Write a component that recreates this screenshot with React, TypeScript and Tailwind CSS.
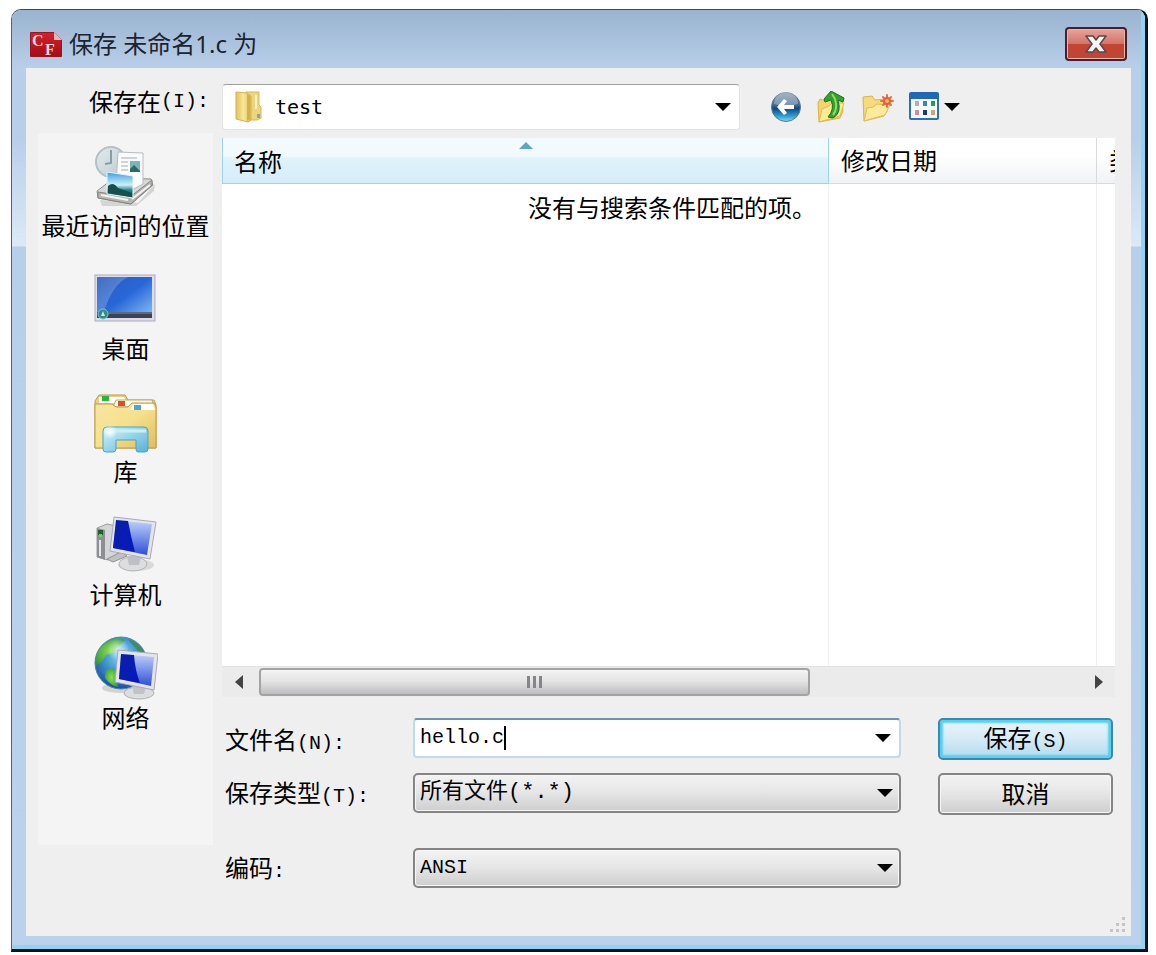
import type { ReactNode } from 'react';

const cjk = "font-['Noto_Sans','Noto_Sans_CJK_SC',sans-serif]";
const mono = "font-['Liberation_Mono','Noto_Sans_CJK_SC',monospace]";

function Caret() {
  return (
    <svg viewBox="0 0 16 8" className="pointer-events-none h-2 w-4" aria-hidden="true">
      <path d="M0 0H16L8 8Z" fill="#000" />
    </svg>
  );
}

function Hotkey({ children }: { children: ReactNode }) {
  return <span className={`text-xl ${mono}`}>{children}</span>;
}

function AppLogo() {
  return (
    <svg viewBox="0 0 32 25" className="h-[25px] w-8" aria-hidden="true">
      <defs>
        <linearGradient id="logoRed" x1="0" y1="0" x2="0" y2="1">
          <stop offset="0" stopColor="#d2222b" />
          <stop offset="1" stopColor="#a30d18" />
        </linearGradient>
      </defs>
      <path d="M0.5 0.5H24L31.5 8V24.5H0.5Z" fill="url(#logoRed)" stroke="#a3121b" />
      <path d="M24 0L32 8H24Z" fill="#e3b6bd" />
      <text x="2" y="14" fontSize="16" fontWeight="700" fontFamily="Liberation Serif, serif" fill="#f6d9dc">C</text>
      <text x="15" y="23" fontSize="16" fontWeight="700" fontFamily="Liberation Serif, serif" fill="#f6d9dc">F</text>
    </svg>
  );
}

function FolderIcon() {
  return (
    <svg viewBox="0 0 28 34" className="h-[34px] w-7 shrink-0" aria-hidden="true">
      <defs>
        <linearGradient id="folderFront" x1="0" y1="0" x2="1" y2="0">
          <stop offset="0" stopColor="#e2c25f" />
          <stop offset="0.5" stopColor="#f8e899" />
          <stop offset="1" stopColor="#dfbd58" />
        </linearGradient>
      </defs>
      <path d="M11 2H24V15L26 17V28L22 30H11Z" fill="#ecd57c" stroke="#d9b95a" />
      <path d="M1 2L12 3L16 6V30L13 32L1 29Z" fill="url(#folderFront)" stroke="#d4b154" />
      <path d="M12 4V31L15 29V6Z" fill="#cfa944" opacity="0.8" />
      <rect x="22" y="24" width="3" height="4" fill="#7fa9a6" />
      <path d="M21 5V19" stroke="#fff6bd" strokeWidth="2" />
    </svg>
  );
}

function BackIcon() {
  return (
    <svg viewBox="0 0 32 32" className="size-8" aria-hidden="true">
      <defs>
        <linearGradient id="backBall" x1="0" y1="0" x2="0" y2="1">
          <stop offset="0" stopColor="#7f93a8" />
          <stop offset="0.45" stopColor="#3b6690" />
          <stop offset="0.55" stopColor="#0d4a80" />
          <stop offset="0.8" stopColor="#2b9ad0" />
          <stop offset="1" stopColor="#7fdcf0" />
        </linearGradient>
      </defs>
      <circle cx="16" cy="16" r="14.5" fill="url(#backBall)" stroke="#5f7890" />
      <path d="M4 13A12 12 0 0 1 28 13Q16 17 4 13Z" fill="#fff" opacity="0.3" />
      <path d="M7 16L14 8L17 10L14 14H24V18H14L17 22L14 24Z" fill="#fff" />
    </svg>
  );
}

function UpIcon() {
  return (
    <svg viewBox="0 0 32 32" className="size-8" aria-hidden="true">
      <path d="M2 12L4 8L9 10L12 7L26 8L27 20L24 27L3 31Z" fill="#f2d571" stroke="#d9b14a" />
      <path d="M3 31L6 18L13 15L16 12L28 12L24 25Z" fill="#fdeb94" stroke="#dfb953" />
      <path d="M15 0L28 7L27 11L22 9Q26 22 17 27L12 26Q19 18 15 9L9 11L8 8Z" fill="#37a02c" stroke="#1b7420" strokeLinejoin="round" />
      <path d="M16 3L19 8Q22 18 17 24" fill="none" stroke="#86dc6c" strokeWidth="2" />
    </svg>
  );
}

function NewFolderIcon() {
  return (
    <svg viewBox="0 0 32 32" className="size-8" aria-hidden="true">
      <path d="M1 6L10 5L13 9L24 8L25 20L22 25L2 30Z" fill="#f6da7c" stroke="#dfb04d" />
      <path d="M2 30L5 17L11 16L15 13L28 14L23 24Z" fill="#fdeb9d" stroke="#e3b95c" />
      <g stroke="#e6713f" strokeWidth="2" strokeLinecap="round">
        <path d="M25 4V16M19 10H31M21 6L29 14M29 6L21 14" />
      </g>
      <circle cx="25" cy="10" r="4" fill="#e9622d" />
      <circle cx="25" cy="10" r="2" fill="#f9b07a" />
    </svg>
  );
}

function ViewIcon() {
  return (
    <svg viewBox="0 0 32 32" className="size-8" aria-hidden="true">
      <rect x="2" y="3" width="28" height="25" rx="1" fill="#f4f8fb" stroke="#2f6fb5" strokeWidth="2" />
      <path d="M1 3Q1 1 3 1H29Q31 1 31 3V8H1Z" fill="#1f68b8" />
      <rect x="7" y="10" width="4" height="5" fill="#b7aeb4" />
      <rect x="15" y="10" width="4" height="5" fill="#3d83c2" />
      <rect x="23" y="10" width="4" height="5" fill="#2f9a45" />
      <rect x="7" y="19" width="4" height="5" fill="#cf9186" />
      <rect x="15" y="19" width="4" height="5" fill="#173c7c" />
      <rect x="23" y="19" width="4" height="5" fill="#c4ab72" />
    </svg>
  );
}

function RecentIcon() {
  return (
    <svg viewBox="0 0 64 64" className="size-16" aria-hidden="true">
      <defs>
        <linearGradient id="clockFace" x1="0" y1="0" x2="1" y2="1">
          <stop offset="0" stopColor="#e4ebec" />
          <stop offset="1" stopColor="#b9cbd2" />
        </linearGradient>
        <linearGradient id="photo" x1="0" y1="0" x2="0" y2="1">
          <stop offset="0" stopColor="#3f9be2" />
          <stop offset="0.5" stopColor="#c9f2f7" />
          <stop offset="0.7" stopColor="#2b7f86" />
          <stop offset="1" stopColor="#0e5a7d" />
        </linearGradient>
      </defs>
      <path d="M6 56L44 59L61 40L60 47L42 62L8 62Z" fill="#777" opacity="0.25" />
      <path d="M3 47L20 34L57 35L59 41L37 60L4 54Z" fill="#d8d8d6" stroke="#8d8d8a" />
      <path d="M4 48L36 53L58 36V41L37 60L4 54Z" fill="#b6b5b2" stroke="#858480" />
      <path d="M7 51L34 56M38 55L56 41" stroke="#f3f3f1" strokeWidth="2" />
      <circle cx="17" cy="18" r="15" fill="url(#clockFace)" stroke="#b3c0c5" strokeWidth="2" />
      <path d="M17 6V19L11 20" fill="none" stroke="#8b9ca6" strokeWidth="2" />
      <path d="M24 8L49 9V40L34 48L22 42Z" fill="#fafafa" stroke="#b7bcc0" />
      <path d="M27 14H43M27 18H34M27 22H34M27 26H34" stroke="#a7adb3" />
      <rect x="36" y="17" width="10" height="11" fill="#79b4b9" />
      <path d="M36 25L40 21L46 27V28H36Z" fill="#276b63" />
      <path d="M13 28L39 32V54L13 50Z" fill="url(#photo)" stroke="#e7f4f8" />
      <path d="M14 42Q19 37 24 44L38 49V53L14 49Z" fill="#174f4c" />
    </svg>
  );
}

function DesktopIcon() {
  return (
    <svg viewBox="0 0 64 64" className="size-16" aria-hidden="true">
      <defs>
        <linearGradient id="desk" x1="0" y1="0" x2="1" y2="1">
          <stop offset="0" stopColor="#2d5cb9" />
          <stop offset="0.5" stopColor="#2867d8" />
          <stop offset="1" stopColor="#8cc1f8" />
        </linearGradient>
        <linearGradient id="deskGlow" x1="0" y1="0" x2="1" y2="1">
          <stop offset="0" stopColor="#fff" stopOpacity="0.1" />
          <stop offset="0.5" stopColor="#fff" stopOpacity="0.2" />
          <stop offset="1" stopColor="#fff" stopOpacity="0" />
        </linearGradient>
      </defs>
      <rect x="1" y="8" width="60" height="46" fill="#dcdde8" stroke="#a9abc0" />
      <rect x="3" y="10" width="55" height="41" fill="url(#desk)" />
      <path d="M3 10H34Q18 18 10 45H3Z" fill="url(#deskGlow)" />
      <rect x="3" y="45" width="55" height="6" fill="#3c4354" />
      <path d="M14 46H58" stroke="#8591a8" />
      <circle cx="9" cy="47" r="5" fill="#2c8d8e" stroke="#87c4c5" />
      <path d="M7 49L9 44L11 49Z" fill="#c7f0c8" />
    </svg>
  );
}

function LibraryIcon() {
  return (
    <svg viewBox="0 0 64 64" className="size-16" aria-hidden="true">
      <defs>
        <linearGradient id="libFolder" x1="0" y1="0" x2="1" y2="1">
          <stop offset="0" stopColor="#f8e6a0" />
          <stop offset="0.5" stopColor="#f5e08c" />
          <stop offset="1" stopColor="#e0bd55" />
        </linearGradient>
        <linearGradient id="libStand" x1="0" y1="0" x2="1" y2="1">
          <stop offset="0" stopColor="#d5f5fc" />
          <stop offset="1" stopColor="#57b1d9" />
        </linearGradient>
        <radialGradient id="libGlow">
          <stop offset="0" stopColor="#fff" />
          <stop offset="1" stopColor="#fff" stopOpacity="0" />
        </radialGradient>
      </defs>
      <path d="M1 58V11L5 5H31L34 10H60L62 15V58Z" fill="#eacf7e" stroke="#bd9a4e" />
      <path d="M5 13V7H30L33 13Z" fill="#fff" />
      <rect x="8" y="6" width="7" height="5" fill="#2db53a" />
      <path d="M19 17L22 10H58L60 17Z" fill="#fffdf3" stroke="#c9a75a" />
      <rect x="24" y="11" width="7" height="5" fill="#cc5431" />
      <path d="M1 58V14H18L22 17H34L38 13H60L62 17V58Z" fill="url(#libFolder)" stroke="#bd9a4e" />
      <path d="M36 20L39 14H59L61 20Z" fill="#fff" />
      <rect x="40" y="15" width="7" height="5" fill="#55a5cb" />
      <path d="M9 59V41Q9 37 13 37H50Q54 37 54 41V59Q54 62 51 62H44Q42 62 42 59V50H22V59Q22 62 19 62H12Q9 62 9 59Z" fill="url(#libStand)" stroke="#4ba2c5" />
      <path d="M11 41H52" stroke="#c5effa" strokeWidth="3" />
      <circle cx="16" cy="42" r="7" fill="url(#libGlow)" />
    </svg>
  );
}

function ScreenGradients({ id }: { id: string }) {
  return (
    <defs>
      <linearGradient id={`${id}Dark`} x1="0" y1="0" x2="1" y2="1">
        <stop offset="0" stopColor="#0b21a4" />
        <stop offset="1" stopColor="#0716c4" />
      </linearGradient>
      <linearGradient id={`${id}Light`} x1="0" y1="0" x2="0" y2="1">
        <stop offset="0" stopColor="#c0d2fa" />
        <stop offset="1" stopColor="#304fd6" />
      </linearGradient>
    </defs>
  );
}

function ComputerIcon() {
  return (
    <svg viewBox="0 0 64 64" className="size-16" aria-hidden="true">
      <ScreenGradients id="pc" />
      <path d="M3 15L13 11L27 14V42L14 47L3 44Z" fill="#d4d5d7" stroke="#9a9ca0" />
      <path d="M3 15L11 17V47L3 44Z" fill="#8c9094" />
      <rect x="4" y="17" width="5" height="5" fill="#295b35" />
      <rect x="5" y="21" width="3" height="3" fill="#6bd457" />
      <path d="M6 27V43" stroke="#e4e5e6" strokeWidth="2" />
      <path d="M13 46L27 39L33 43L19 49Z" fill="#c0c1c3" stroke="#909295" />
      <ellipse cx="42" cy="52" rx="18" ry="6" fill="#aaa" opacity="0.35" />
      <ellipse cx="39" cy="51" rx="14" ry="7" fill="#dcdddf" stroke="#b3b4b7" />
      <path d="M33 43H47L45 52H35Z" fill="#bfc0c3" />
      <path d="M20 4L62 9L56 46L16 38Z" fill="#e4e5ec" stroke="#a8a9b6" />
      <path d="M22 7L58 11L53 42L19 35Z" fill="url(#pcLight)" />
      <path d="M22 7L34 8Q37 24 41 39L19 35Z" fill="url(#pcDark)" />
    </svg>
  );
}

function NetworkIcon() {
  return (
    <svg viewBox="0 0 64 64" className="size-16" aria-hidden="true">
      <ScreenGradients id="net" />
      <defs>
        <radialGradient id="globeSea" cx="0.5" cy="0.35" r="0.65">
          <stop offset="0" stopColor="#8fdcee" />
          <stop offset="0.5" stopColor="#3f94cf" />
          <stop offset="1" stopColor="#1b4fa0" />
        </radialGradient>
        <radialGradient id="globeLand" cx="0.5" cy="0.5" r="0.7">
          <stop offset="0" stopColor="#8be04c" />
          <stop offset="1" stopColor="#2c8d45" />
        </radialGradient>
        <radialGradient id="globeShine">
          <stop offset="0" stopColor="#fff" stopOpacity="0.7" />
          <stop offset="1" stopColor="#fff" stopOpacity="0" />
        </radialGradient>
      </defs>
      <ellipse cx="26" cy="52" rx="18" ry="5" fill="#888" opacity="0.3" />
      <circle cx="27" cy="27" r="26" fill="url(#globeSea)" stroke="#4f86a8" />
      <path d="M2 20Q8 5 24 2L31 4L25 10L19 17L12 19L8 26L2 29Z" fill="url(#globeLand)" />
      <path d="M11 35L17 32L24 36L24 51Q16 49 11 42Z" fill="url(#globeLand)" />
      <path d="M34 3Q46 7 51 17L44 15L39 9Z" fill="#3a8d68" />
      <circle cx="24" cy="13" r="11" fill="url(#globeShine)" />
      <ellipse cx="45" cy="57" rx="15" ry="6" fill="#dcdddf" stroke="#b0b1b5" />
      <path d="M38 50H52L50 58H40Z" fill="#c2c3c6" />
      <path d="M24 14L64 18L60 54L21 46Z" fill="#e4e5ec" stroke="#a8a9b6" />
      <path d="M27 18L60 21L57 50L25 43Z" fill="url(#netLight)" />
      <path d="M27 18L40 19Q41 34 46 47L25 43Z" fill="url(#netDark)" />
    </svg>
  );
}

const places = [
  { label: '最近访问的位置', icon: <RecentIcon /> },
  { label: '桌面', icon: <DesktopIcon /> },
  { label: '库', icon: <LibraryIcon /> },
  { label: '计算机', icon: <ComputerIcon /> },
  { label: '网络', icon: <NetworkIcon /> },
];

function TitleBar() {
  return (
    <header className="flex h-[58px] items-center pt-2.5 pr-1 pl-1">
      <AppLogo />
      <h1 className="ml-[7px] flex-1 text-2xl leading-8 text-[#1b2430]">保存 未命名1.c 为</h1>
      <button
        aria-label="关闭"
        className="flex h-[34px] w-[62px] items-center justify-center rounded border-2 border-[#4a1e2c] bg-linear-to-b from-[#e5a49c] from-0% via-[#d4746a] via-48% to-[#cf6c58] shadow-[inset_0_0_0_1px_#eab3aa,inset_0_-15px_0_0_#c04532]"
      >
        <svg viewBox="0 0 22 18" className="h-[18px] w-[22px]" aria-hidden="true">
          <path d="M1 1H8L11 5L14 1H21L15 9L21 17H14L11 13L8 17H1L7 9Z" fill="#f4f4f4" stroke="#5b4650" strokeWidth="1.5" strokeLinejoin="round" />
        </svg>
      </button>
    </header>
  );
}

function LookInRow() {
  return (
    <div className="grid grid-cols-[175px_1fr] gap-x-[9px]">
      <label htmlFor="look-in" className="flex h-9 items-center justify-end pr-1 text-2xl">
        保存在<Hotkey>(I):</Hotkey>
      </label>
      <div className="flex items-center">
        <div className="flex h-[46px] flex-1 items-center rounded-sm border border-[#e3e3e3] border-t-[#a0a0a0] bg-white pl-3">
          <FolderIcon />
          <div className="grid flex-1 items-center">
            <select
              id="look-in"
              className="col-start-1 row-start-1 h-10 w-full appearance-none bg-transparent pl-3 font-['DejaVu_Sans_Mono',monospace] text-xl"
            >
              <option>test</option>
            </select>
            <span className="pointer-events-none col-start-1 row-start-1 mr-2 justify-self-end">
              <Caret />
            </span>
          </div>
        </div>
        <div className="flex w-[375px] items-center gap-[14px] pl-[30px]">
          <button aria-label="后退"><BackIcon /></button>
          <button aria-label="向上一级"><UpIcon /></button>
          <button aria-label="新建文件夹"><NewFolderIcon /></button>
          <button aria-label="查看" className="flex items-center gap-1">
            <ViewIcon />
            <Caret />
          </button>
        </div>
      </div>
    </div>
  );
}

function PlacesBar() {
  return (
    <nav className="flex flex-col gap-[25px] self-start bg-[#f4f4f4] pt-[11px] pb-[111px]">
      {places.map((place) => (
        <button key={place.label} className="flex flex-col items-center gap-0.5">
          {place.icon}
          <span className="text-2xl leading-8 whitespace-nowrap">{place.label}</span>
        </button>
      ))}
    </nav>
  );
}

function FileList() {
  return (
    <div>
      <table className="w-full table-fixed border-separate border-spacing-0 bg-white text-left">
        <colgroup>
          <col />
          <col className="w-[268px]" />
          <col className="w-[18px]" />
        </colgroup>
        <thead>
          <tr className="h-[46px] text-2xl">
            <th className="border-r border-b border-l border-[#9fd3ea] bg-linear-to-b from-[#f3fafd] from-40% via-[#e0f2fa] via-45% to-[#d5edf8] p-0 font-normal">
              <div className="grid h-[45px] grid-rows-[10px_1fr]">
                <svg viewBox="0 0 14 7" className="mt-1 h-[7px] w-3.5 justify-self-center" aria-hidden="true">
                  <path d="M0 7L7 0L14 7Z" fill="#5fa5cb" />
                </svg>
                <span className="pl-[11px] leading-7">名称</span>
              </div>
            </th>
            <th className="border-r border-b border-[#d8dadd] bg-linear-to-b from-white from-40% to-[#f1f2f4] p-0 pl-3 font-normal">
              修改日期
            </th>
            <th className="overflow-hidden border-b border-[#d8dadd] bg-linear-to-b from-white from-40% to-[#f1f2f4] p-0 pl-3 font-normal whitespace-nowrap">
              类型
            </th>
          </tr>
        </thead>
        <tbody>
          <tr className="h-[482px] align-top text-2xl leading-8">
            <td className="border-r border-[#eef0f3] p-0 pt-2 pr-3 text-right">没有与搜索条件匹配的项。</td>
            <td className="border-r border-[#eef0f3] p-0" />
            <td className="p-0" />
          </tr>
        </tbody>
      </table>
      <div className="flex h-[31px] items-center border-t border-[#e2e2e2] bg-[#ebebeb]">
        <button aria-label="向左滚动" className="flex h-full w-[37px] items-center justify-center pr-1">
          <svg viewBox="0 0 8 14" className="h-3.5 w-2" aria-hidden="true">
            <path d="M8 0V14L0 7Z" fill="#444" />
          </svg>
        </button>
        <div className="flex-1">
          <div className="flex h-7 w-[67%] items-center justify-center gap-[3px] rounded-sm border-2 border-[#a3a3a3] bg-linear-to-b from-[#f4f4f4] from-0% via-[#e4e4e5] via-45% to-[#bfbfc2]">
            <span className="h-3 w-[3px] bg-[#85868a]" />
            <span className="h-3 w-[3px] bg-[#85868a]" />
            <span className="h-3 w-[3px] bg-[#85868a]" />
          </div>
        </div>
        <button aria-label="向右滚动" className="flex h-full w-[33px] items-center justify-center">
          <svg viewBox="0 0 8 14" className="h-3.5 w-2" aria-hidden="true">
            <path d="M0 0L8 7L0 14Z" fill="#444" />
          </svg>
        </button>
      </div>
    </div>
  );
}

const glossy =
  'border-2 border-[#858585] bg-linear-to-b from-[#f3f3f3] from-0% via-[#e6e6e6] via-48% to-[#cecece] shadow-[inset_0_0_0_1px_#f6f6f6]';

function Dropdown({ id, option, className }: { id: string; option: string; className: string }) {
  return (
    <div className="grid items-center">
      <select
        id={id}
        className={`col-start-1 row-start-1 h-10 w-full appearance-none rounded-[5px] pl-[5px] ${glossy} ${mono} ${className}`}
      >
        <option>{option}</option>
      </select>
      <span className="pointer-events-none col-start-1 row-start-1 mr-2 justify-self-end">
        <Caret />
      </span>
    </div>
  );
}

function SaveForm() {
  return (
    <form
      className="mt-[21px] grid grid-cols-[191px_1fr_214px] items-start gap-y-[13px] text-2xl"
      onSubmit={(e) => e.preventDefault()}
    >
      <label htmlFor="file-name" className="pt-1.5 pl-[3px] leading-8">
        文件名<Hotkey>(N):</Hotkey>
      </label>
      <div className="flex h-10 items-center rounded border-2 border-[#c3d9ea] border-t-[#6d93ad] bg-white pr-2 pl-[5px]">
        <input
          id="file-name"
          defaultValue="hello.c"
          className={`field-sizing-content bg-transparent text-xl outline-none ${mono}`}
        />
        <span className="h-6 w-0.5 bg-black" />
        <button type="button" aria-label="历史文件名" className="ml-auto">
          <Caret />
        </button>
      </div>
      <div className="pr-0.5 pl-[37px]">
        <button
          type="submit"
          className="h-[42px] w-full rounded-[5px] border-2 border-[#3d87a8] bg-linear-to-b from-[#e9f5fb] from-0% via-[#d6ebf6] via-48% to-[#b4d9ee] shadow-[inset_0_0_2px_3px_#55d0f3]"
        >
          保存<Hotkey>(S)</Hotkey>
        </button>
      </div>

      <label htmlFor="file-type" className="pt-1 pl-[3px] leading-8">
        保存类型<Hotkey>(T):</Hotkey>
      </label>
      <Dropdown id="file-type" option="所有文件(*.*)" className="text-[22px]" />
      <div className="pr-0.5 pl-[37px]">
        <button type="button" className={`h-[42px] w-full rounded-[5px] ${glossy}`}>取消</button>
      </div>

      <label htmlFor="encoding" className="mt-5 pt-1 pl-[3px] leading-8">
        编码<Hotkey>:</Hotkey>
      </label>
      <div className="mt-5">
        <Dropdown id="encoding" option="ANSI" className="text-xl" />
      </div>
    </form>
  );
}

function SizeGrip() {
  return (
    <svg viewBox="0 0 18 18" className="ml-auto size-[18px]" fill="#c4c4c4" aria-hidden="true">
      <rect x="13" y="1" width="3" height="3" />
      <rect x="7" y="7" width="3" height="3" />
      <rect x="13" y="7" width="3" height="3" />
      <rect x="1" y="13" width="3" height="3" />
      <rect x="7" y="13" width="3" height="3" />
      <rect x="13" y="13" width="3" height="3" />
    </svg>
  );
}

// The frame fades from the title bar down to the glass reflection on both sides.
const glass =
  'bg-[linear-gradient(to_bottom,#9ab3d0_0,#b9cfe9_58px,#b9cfe9_130px,#dce9f7_236px,#b7cfe9_237px,#bcd2ec_100%)]';

export default function App() {
  return (
    <div className={`bg-white pt-[9px] pr-2 pb-1 pl-[11px] text-black ${cjk}`}>
      <div className="overflow-hidden rounded-t-[10px] border-t border-r-[3px] border-b-[3px] border-l border-t-[#3f4a55] border-r-[#02121b] border-b-[#02121b] border-l-[#56616d]">
        <div className={`border-r-4 border-b-4 border-[#8fd4f5] pr-[10px] pb-[9px] pl-[14px] ${glass}`}>
          <TitleBar />
          <main className="bg-[#efefef] pt-4 pr-4 pl-3">
            <LookInRow />
            <div className="mt-[3px] grid grid-cols-[175px_1fr] gap-x-[9px]">
              <PlacesBar />
              <div className="pt-[5px]">
                <FileList />
                <SaveForm />
              </div>
            </div>
            <div className="-mr-3 pt-7 pb-0.5">
              <SizeGrip />
            </div>
          </main>
        </div>
      </div>
    </div>
  );
}
